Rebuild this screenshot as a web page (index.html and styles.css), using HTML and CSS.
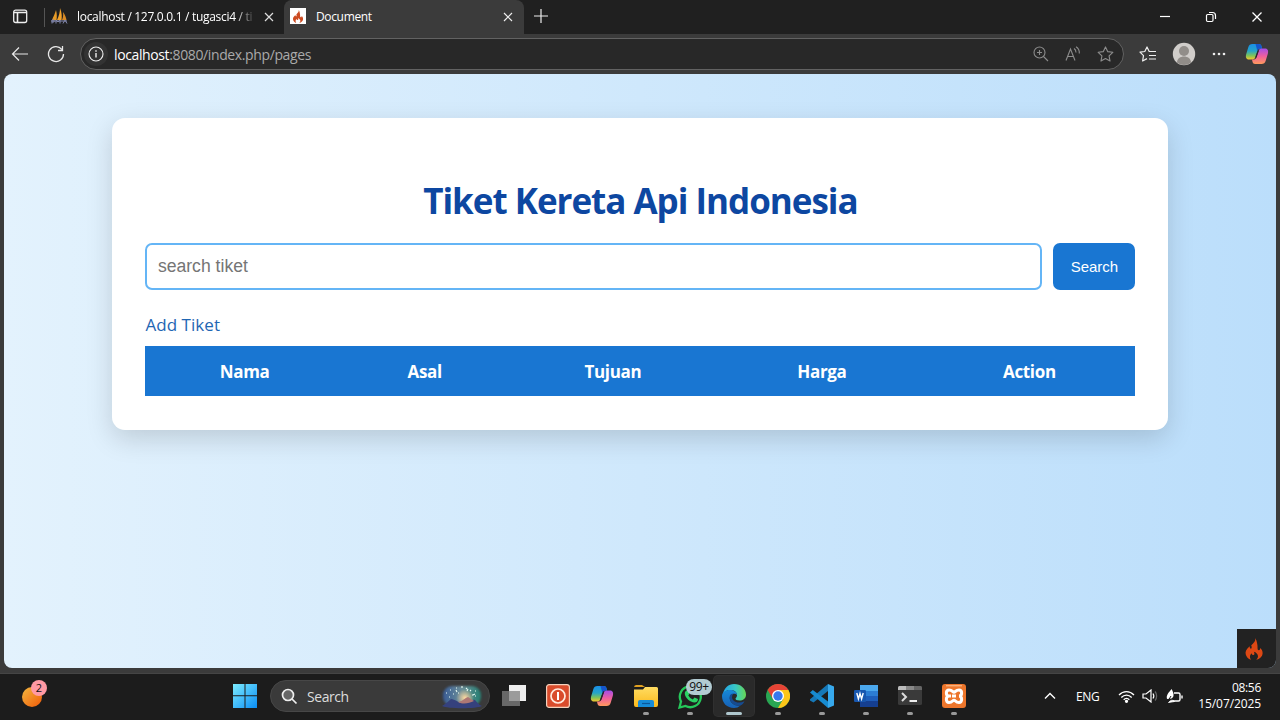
FILE: index.html
```html
<!DOCTYPE html>
<html lang="id">
<head>
<meta charset="utf-8">
<title>Document</title>
<link rel="stylesheet" href="styles.css">
</head>
<body>
<svg class="defs" width="0" height="0">
  <defs>
    <linearGradient id="cpA" x1="0" y1="0" x2="0" y2="1"><stop offset="0" stop-color="#1a8fe8"/><stop offset=".45" stop-color="#25a5c8"/><stop offset=".75" stop-color="#7ec35a"/><stop offset="1" stop-color="#f5c52c"/></linearGradient>
    <linearGradient id="cpB" x1="0" y1="0" x2="0" y2="1"><stop offset="0" stop-color="#a34de8"/><stop offset=".5" stop-color="#ef5f9d"/><stop offset="1" stop-color="#ff9a5c"/></linearGradient>
    <linearGradient id="win" x1="0" y1="0" x2="1" y2="1"><stop offset="0" stop-color="#7cecff"/><stop offset="1" stop-color="#0a8df5"/></linearGradient>
    <linearGradient id="ball" x1="0" y1="0" x2="1" y2="1"><stop offset="0" stop-color="#f3b840"/><stop offset="1" stop-color="#f05a08"/></linearGradient>
    <linearGradient id="folder" x1="0" y1="0" x2="0" y2="1"><stop offset="0" stop-color="#ffdc62"/><stop offset="1" stop-color="#fbb91c"/></linearGradient>
    <linearGradient id="edgeTop" x1="0" y1="0" x2="1" y2="0"><stop offset="0" stop-color="#23a4e8"/><stop offset=".55" stop-color="#39c9c5"/><stop offset="1" stop-color="#66d653"/></linearGradient>
    <linearGradient id="edgeLow" x1="0" y1="0" x2="0" y2="1"><stop offset="0" stop-color="#1689d8"/><stop offset="1" stop-color="#1760b5"/></linearGradient>
    <linearGradient id="sky" x1="0" y1="0" x2="1" y2="0"><stop offset="0" stop-color="#385b96"/><stop offset=".5" stop-color="#6d8f98"/><stop offset="1" stop-color="#257f72"/></linearGradient>
    <radialGradient id="glow"><stop offset="0" stop-color="#ffd9a0"/><stop offset="1" stop-color="#ffd9a0" stop-opacity="0"/></radialGradient>
    <filter id="soft" x="-10%" y="-10%" width="120%" height="120%"><feGaussianBlur stdDeviation="1.2"/></filter>
    <symbol id="flame" viewBox="0 0 18 22"><path d="M10.2 0C11 3 8.500 5 6.200 7.500 7 8.800 6.800 10 6 10.800 5.200 10.600 4.600 9.600 4.700 8.300 1.500 11 0 13.400.7 16.300 1.300 19 3.200 20.900 6 21.800 4.300 19.500 4.700 17 6.600 15.200c.2 1.300 1 2 2 1.800 1.300-.4 1-2 .2-3.200 2.200.5 4.200 2.400 4.200 4.400 0 1.500-.8 2.800-2 3.600 3.800-.8 6.400-3.300 6.600-6.300.2-2.600-1-4.300-2.500-5.500.2 1.200-.3 2.200-1.200 2.300C12 12 12.800 9.800 12.400 7 12 4 11.400 1.800 10.200 0z"/></symbol>
    <symbol id="copilot" viewBox="0 0 24 22"><path d="M7.500 1h6.300c1.900 0 2.500 1.300 2.900 3l.3 1.500h-2c-1.500 0-2.200 1-2.600 2.400L10.300 14c-.6 1.800-1.400 2.500-3 2.500H4C1 16.500.5 14 1.100 11.500L3.300 4.200C4 2 5.200 1 7.500 1z" fill="url(#cpA)"/><path d="M10.500 1h3.300c1.900 0 2.500 1.300 2.900 3l.3 1.500h-2c-1.500 0-2.200 1-2.600 2.400z" fill="#1555cc"/><path d="M16.500 21h-6.300c-1.900 0-2.500-1.300-2.900-3L7 16.500h2c1.500 0 2.200-1 2.600-2.400L13.700 8c.6-1.800 1.400-2.500 3-2.500H20c3 0 3.500 2.500 2.900 5l-2.200 7.300C20 20 18.800 21 16.500 21z" fill="url(#cpB)"/><path d="M12.700 7.500 10.300 14.500 11.500 14.500 13.900 7.500z" fill="#2a2430"/></symbol>
  </defs>
</svg>

<header class="tabstrip">
  <svg class="tab-menu" width="16" height="16" viewBox="0 0 16 16" fill="none" stroke="#eee" stroke-width="1.300"><rect x="1.700" y="2.200" width="13" height="12.300" rx="2"/><path d="M2 4.500h12.500M5.500 4.500v10" stroke-width="1.600"/></svg>
  <div class="tab tab-back">
    <svg width="18" height="17" viewBox="0 0 18 17"><path d="M2 12C3 9 5 6 6 2c1 4 1 7 .5 10z" fill="#e79b27"/><path d="M7 12c2-4 3-8 3-12 2 5 2 9 1.500 12z" fill="#f3a32b"/><path d="M12 12c1-2 1.500-5 1-8 2 3 3 5 3.500 8z" fill="#d98a25"/><path d="M1 13h16M2 15.500V12h2v2H2m4 1.500V12l2 2 2-2v3.500m3 0 2-3.500 2 3.500" fill="none" stroke="#8388ae" stroke-width="1"/></svg>
    <span class="tab-title long">localhost / 127.0.0.1 / tugasci4 / ti</span>
    <svg class="x" width="10" height="10" viewBox="0 0 10 10" stroke="#ddd" stroke-width="1.200"><path d="m1 1 8 8m0-8L1 9"/></svg>
  </div>
  <div class="tab tab-active">
    <span class="fav"><svg width="12" height="13" fill="#cc4a20"><use href="#flame"/></svg></span>
    <span class="tab-title">Document</span>
    <svg class="x" width="10" height="10" viewBox="0 0 10 10" stroke="#eee" stroke-width="1.200"><path d="m1 1 8 8m0-8L1 9"/></svg>
  </div>
  <svg class="plus" width="14" height="14" viewBox="0 0 14 14" stroke="#eee" stroke-width="1.200"><path d="M7 0v14M0 7h14"/></svg>
  <div class="window-buttons">
    <svg width="12" height="12" viewBox="0 0 12 12" stroke="#fff" stroke-width="1.200"><path d="M1 5.500h10"/></svg>
    <svg width="12" height="12" viewBox="0 0 12 12" fill="none" stroke="#fff" stroke-width="1.200"><rect x="1.500" y="3.500" width="6.500" height="7" rx="1.200"/><path d="M4 1.500h3.500c2 0 3 1 3 3V8"/></svg>
    <svg width="12" height="12" viewBox="0 0 12 12" stroke="#fff" stroke-width="1.300"><path d="m1.500 1.500 9 9m0-9-9 9"/></svg>
  </div>
</header>

<nav class="toolbar">
  <svg width="18" height="16" viewBox="0 0 18 16" fill="none" stroke="#e8e8e8" stroke-width="1.200"><path d="M17 8H1.500M8 1.500 1.500 8 8 14.500"/></svg>
  <svg width="18" height="18" viewBox="0 0 18 18" fill="none" stroke="#e8e8e8" stroke-width="1.300"><path d="M16.500 9A7.500 7.500 0 1 1 14.800 4.300M11 5.500h4.500V1"/></svg>
  <div class="address">
    <span class="info"><svg width="16" height="16" viewBox="0 0 16 16" fill="none" stroke="#eee" stroke-width="1.100"><circle cx="8" cy="8" r="7"/><path d="M8 7v4.500M8 4.300v1.400" stroke-width="1.400"/></svg></span>
    <span class="url"><b>localhost</b>:8080/index.php/pages</span>
    <div class="address-icons">
      <svg width="16" height="16" viewBox="0 0 16 16" fill="none" stroke="#8c8c8c" stroke-width="1.100"><circle cx="6.500" cy="6.500" r="5.500"/><path d="m10.500 10.500 4.500 4.500M6.500 4v5M4 6.500h5"/></svg>
      <svg width="16" height="16" viewBox="0 0 16 16" fill="none" stroke="#8c8c8c" stroke-width="1.100"><path d="M1 14.500 5.500 3 10 14.500M2.500 10.500h6M9 2.500c1.500 1 2 2.500 2 4M11 .8c2.500 1.500 3.500 4 3.300 6.700"/></svg>
      <svg width="17" height="16" viewBox="0 0 18 17" fill="none" stroke="#8c8c8c" stroke-width="1.200" stroke-linejoin="round"><path d="m9 1 2.400 5 5.400.7-4 3.800 1 5.500L9 13.400 4.200 16l1-5.500-4-3.800L6.600 6z"/></svg>
    </div>
  </div>
  <div class="browser-actions">
    <svg width="18" height="16" viewBox="0 0 18 16" fill="none" stroke="#eee" stroke-width="1.200" stroke-linejoin="round"><path d="M10.500 5.500h-.3L8 1 5.800 5.500 1 6.200l3.500 3.500L3.600 15 8 12.600M10.500 5.500H17M10 9.500h7M10 13h7"/></svg>
    <svg width="24" height="24" viewBox="0 0 24 24"><circle cx="12" cy="12" r="11.200" fill="#d0cdca"/><circle cx="12" cy="9" r="5" fill="#918d89"/><path d="M5 20.500c0-8 14-8 14 0a11 11 0 0 1-14 0z" fill="#918d89"/></svg>
    <svg width="16" height="4" viewBox="0 0 16 4" fill="#eee"><circle cx="3" cy="2" r="1.300"/><circle cx="8" cy="2" r="1.300"/><circle cx="13" cy="2" r="1.300"/></svg>
    <svg width="24" height="22"><use href="#copilot"/></svg>
  </div>
</nav>

<main class="page">
  <section class="card">
    <h1>Tiket Kereta Api Indonesia</h1>
    <form class="search">
      <input type="text" placeholder="search tiket">
      <button type="button">Search</button>
    </form>
    <a class="add">Add Tiket</a>
    <table>
      <colgroup><col class="c1"><col class="c2"><col class="c3"><col class="c4"><col class="c5"></colgroup>
      <thead><tr><th>Nama</th><th>Asal</th><th>Tujuan</th><th>Harga</th><th>Action</th></tr></thead>
    </table>
  </section>
  <div class="debug"><svg width="18" height="22" fill="#dd4814"><use href="#flame"/></svg></div>
</main>

<footer class="taskbar">
  <div class="widget">
    <svg width="20" height="20" viewBox="0 0 20 20"><circle cx="10" cy="10" r="10" fill="url(#ball)"/></svg>
    <span class="count">2</span>
  </div>
  <svg class="start" width="24" height="24" viewBox="0 0 24 24" fill="url(#win)"><path d="M0 0h11.500v11.300H0zM12.500 0H24v11.300H12.500zM0 12.300h11.500V24H0zM12.500 12.300H24V24H12.500z"/></svg>
  <div class="find">
    <svg width="17" height="17" viewBox="0 0 17 17" fill="#666" stroke="#eee" stroke-width="1.700"><circle cx="7" cy="7" r="5.500"/><path d="m11 11 4.500 4.500"/></svg>
    <span>Search</span>
    <svg class="scene" width="42" height="26" viewBox="0 0 42 26"><rect x="2" y="3" width="38" height="20" rx="9" fill="url(#sky)" filter="url(#soft)"/><circle cx="24" cy="15" r="9" fill="url(#glow)"/><path d="M5 10h1m3-3h1m2 4h1m2-6h1m1 5h1m3-7v2m4 1 1-1m3 3 1-1m1 5h1m2-4h1m-1 5h1M8 14h1m6-7 1 2m10-1 1-2m5 6 2-1" stroke="#e7fbf4" stroke-width="1.100"/><path d="M1 23c3-2 6-4 9-7 4 0 7 4 12 4 6 0 8-4 12-3 2 2 4 5 7 6-5 3-35 3-40 0z" fill="#35417d"/><path d="M17 19c5-1 7-4 10-5 2 1 4 3 6 4-5 2-10 4-16 1z" fill="#ad7774"/></svg>
  </div>
  <div class="apps">
    <div class="app"><svg width="24" height="24" viewBox="0 0 24 24"><path d="M7 1h17v16H7z" fill="#eee"/><path d="M0 7h18v15H0z" fill="#686868"/><path d="M7 7h11v10H7z" fill="#9b9b9b"/></svg></div>
    <div class="app"><svg width="24" height="24" viewBox="0 0 24 24"><rect x=".6" y=".6" width="22.800" height="22.800" rx="2.500" fill="#d94c2c" stroke="#f4d2bd" stroke-width="1.200"/><circle cx="12" cy="12" r="7" fill="none" stroke="#ffeade" stroke-width="1.700"/><path d="M12 8v8" stroke="#fff" stroke-width="2"/></svg></div>
    <div class="app"><svg width="24" height="22"><use href="#copilot"/></svg></div>
    <div class="app open"><svg width="24" height="24" viewBox="0 0 24 24"><path d="M0 3.500Q0 1 2 1h6l3 2H0z" fill="#e0a020"/><path d="M0 5.500h9L11 3h11.500Q24 3 24 4.500V21q0 2-2 2H2q-2 0-2-2z" fill="url(#folder)"/><path d="M4 23v-5q0-2 2-2h12q2 0 2 2v5z" fill="#168bd8"/><path d="M8 19.500h8" stroke="#0a579a" stroke-width="1.200"/></svg></div>
    <div class="app open"><svg width="25" height="25" viewBox="0 0 25 25"><path d="m1.500 23.500 1.500-6A10.500 10.500 0 1 1 7.500 22z" fill="#202020" stroke="#25c95a" stroke-width="2.300"/><path d="M7 8q2-3 3.500-1l1 2.500-1.200 2q1.500 2.800 4.500 4l1.700-2L20 15c0 4-4 4-7 2.500-4-2-7-6-6-9.500z" fill="#2bd264"/></svg><span class="unread">99+</span></div>
    <div class="app open current"><svg width="24" height="24" viewBox="0 0 24 24"><path d="M1 10C2 4 6.500 0 12 0c7 0 12 5 12 10.500 0 4-3 6-6.500 6-3 0-4-1-4-2 1-1 1.500-2 1.500-3C15 7 11 6 8 6c-3.500 0-6 1.800-7 4z" fill="url(#edgeTop)"/><path d="M0 12c0-3.500 3.500-6 8-6 3.500 0 7 2 7 5-1-1-2-1.500-3.500-1.200C8 10.500 7 14 8.500 17c1.500 3 5.500 5.500 10 4.500-2 1.700-4 2.500-6.500 2.500C5 24 0 19 0 12z" fill="url(#edgeLow)"/><path d="M8.500 17c-2-4-.5-7.500 3-7.500-2 2.500-2 5 0 7 3 2.800 7 2.500 11 .8-.8 1.800-2 3.200-4 4.200-4.500 1-8.500-1.500-10-4.500z" fill="#164b91"/></svg></div>
    <div class="app open"><svg width="24" height="24" viewBox="0 0 24 24"><circle cx="12" cy="12" r="12" fill="#29a653"/><path d="M1.600 6A12 12 0 0 1 22.400 6H12L7 15z" fill="#e64335"/><path d="M22.400 6A12 12 0 0 1 12 24l5.200-9L12 6z" fill="#fbc619"/><circle cx="12" cy="12" r="6" fill="#fff"/><circle cx="12" cy="12" r="4.700" fill="#3779ed"/></svg></div>
    <div class="app open"><svg width="24" height="24" viewBox="0 0 24 24"><path d="M18 0v7L3.500 18.500 0 16.500v-1.200z" fill="#1678b7"/><path d="M0 8.500 2.800 6 18 17.500V24z" fill="#178bd0"/><path d="m18 0 6 2.500v19L18 24z" fill="#37a9ed"/></svg></div>
    <div class="app open"><svg width="24" height="24" viewBox="0 0 24 24"><path d="M6 1h18v6H6z" fill="#4ba8ed"/><path d="M6 7h18v5H6z" fill="#2c7dd4"/><path d="M6 12h18v5H6z" fill="#1e5ebb"/><path d="M6 17h18v6H6z" fill="#153f91"/><rect y="6" width="12" height="12" rx="1.200" fill="#1857af"/><path d="m2.800 9 1.600 6L6 9.500 7.600 15l1.600-6" fill="none" stroke="#fff" stroke-width="1.400"/></svg></div>
    <div class="app open"><svg width="24" height="20" viewBox="0 0 24 20"><rect width="24" height="19" rx="1.500" fill="#3a3a3a"/><path d="M0 4V1.500Q0 0 1.500 0H8v4z" fill="#bbb"/><path d="M8 0h8v4H8z" fill="#888"/><path d="M16 0h6.500Q24 0 24 1.500V4h-8z" fill="#666"/><path d="m4 7 4 4-4 4" fill="none" stroke="#ddd" stroke-width="2"/><path d="M11.500 15H19" stroke="#eee" stroke-width="2"/></svg></div>
    <div class="app open"><svg width="24" height="24" viewBox="0 0 24 24"><rect width="24" height="24" rx="3" fill="#ed762c"/><path d="M4 1.800h16" stroke="#ffc89b"/><path d="M9 12H7c-3.500 0-3.500-6 0-6s3.500 2.200 5 2.200S13.500 6 17 6s3.500 6 0 6c3.500 0 3.500 6.500 0 6.500s-3.500-2.300-5-2.300-1.500 2.300-5 2.300S3.500 12 7 12M10 12h4" fill="none" stroke="#fff" stroke-width="3"/></svg></div>
  </div>
  <div class="tray">
    <svg class="chev" width="12" height="8" viewBox="0 0 12 8" fill="none" stroke="#fff" stroke-width="1.400"><path d="m1 6.500 5-5 5 5"/></svg>
    <span class="lang">ENG</span>
    <svg class="wifi" width="17" height="13" viewBox="0 0 17 13" fill="none" stroke="#fff" stroke-width="1.300"><path d="M1 5c4.300-4.500 10.700-4.500 15 0M3.300 7.500c3-3.300 7.400-3.300 10.400 0M5.700 9.800c1.700-1.900 3.900-1.900 5.600 0"/><circle cx="8.500" cy="11.300" r="1" fill="#fff"/></svg>
    <svg class="volume" width="17" height="14" viewBox="0 0 17 14" fill="none" stroke="#fff" stroke-width="1.200"><path d="M1 5h3l5-4v12L4 9H1z"/><path d="M11 4.500c1 1.500 1 3.500 0 5"/><path d="M13 2.500c2.200 2.500 2.200 6.500 0 9" stroke="#666"/></svg>
    <svg width="17" height="15" viewBox="0 0 17 15" fill="none" stroke="#fff" stroke-width="1.400"><path d="M8 4h4.500Q14 4 14 5.500v5Q14 12 12.500 12H7"/><path d="M16 6.500v3"/><path d="M5.500 0c2.500 4 3 8 0 9.500L1 10C0 6 2.500 4 5.500 0z" fill="#fff" stroke="none"/><path d="M1 13.500 5 7" stroke="#1c1c1c" stroke-width="1"/><path d="M2.500 13.500Q6 9.500 8.500 12.500z" fill="#fff" stroke-width=".8"/></svg>
    <div class="clock"><span>08:56</span><span class="date">15/07/2025</span></div>
  </div>
</footer>
</body>
</html>
```
FILE: styles.css
```css
* { box-sizing: border-box; }
body { margin: 0; width: 1280px; height: 720px; overflow: hidden; display: flex; flex-direction: column; background: #3b3b3b; font-family: "Open Sans", "Noto Sans", sans-serif; color: #fff; }
svg { display: block; flex: none; }
.defs { position: absolute; }

.tabstrip { height: 34px; flex: none; display: flex; align-items: center; background: #202020; }
.tab-menu { margin: 0 16px 2px 12px; }
.tab { display: flex; align-items: center; }
.tab-back { width: 240px; height: 34px; padding: 0 10px 2px 6px; border-radius: 0 0 8px 0; background: linear-gradient(#555, #555) 0 8px / 1px 19px no-repeat; }
.tab-title { font-size: 12px; letter-spacing: -0.3px; white-space: nowrap; }
.long { width: 179px; margin-left: 9px; overflow: hidden; -webkit-mask-image: linear-gradient(90deg, #000 88%, transparent); mask-image: linear-gradient(90deg, #000 88%, transparent); }
.tab-back .x { margin: 1px 0 0 auto; }
.tab-active { width: 240px; height: 34px; padding: 0 11px 2px 6px; background: #3b3b3b; border-radius: 8px 8px 0 0; }
.tab-active .tab-title { margin-left: 10px; letter-spacing: -0.35px; }
.tab-active .x { margin: 1px 0 0 auto; }
.fav { width: 16px; height: 16px; display: flex; align-items: center; justify-content: center; background: #fff; }
.plus { margin: 0 0 3px 10px; }
.window-buttons { margin-left: auto; padding-right: 17px; display: flex; gap: 34px; }

.toolbar { height: 40px; flex: none; display: flex; align-items: center; padding-left: 11px; }
.toolbar > svg:nth-child(2) { margin: 0 15px 0 18px; }
.address { width: 1044px; height: 32px; display: flex; align-items: center; padding: 0 9px 0 3px; border: 1px solid #626262; border-radius: 16px; background: #282828; }
.info { width: 24px; height: 24px; display: flex; align-items: center; justify-content: center; border-radius: 50%; background: #333; }
.url { margin-left: 6px; font-size: 14px; letter-spacing: -0.38px; color: #aaa; }
.url b { font-weight: 400; color: #fff; }
.address-icons { margin-left: auto; display: flex; align-items: center; gap: 16px; }
.browser-actions { display: flex; align-items: center; margin-left: 15px; gap: 15px; }
.browser-actions svg:last-child { margin-left: 3px; }

.page { flex: 1; min-height: 0; position: relative; margin: 0 4px 5px; padding-top: 44px; border-radius: 8px; overflow: hidden; background: linear-gradient(to right, #e3f2fd, #bbdefb); }
.card { width: 1056px; height: 311.500px; margin: 0 auto; padding: 57px 32.600px 0 33.400px; border-radius: 13px; background: #fff; box-shadow: 0 9px 27px rgba(0, 0, 0, .15); }
h1 { margin: 0; height: 51px; line-height: 51px; text-align: center; color: #0d47a1; font-size: 35px; font-weight: 700; letter-spacing: -1.02px; white-space: nowrap; }
.search { display: flex; gap: 11px; margin-top: 17.400px; }
.search input { width: 897.500px; height: 46.500px; padding: 0 10.500px; border: 2px solid #64b5f6; border-radius: 7px; outline: 0; font: 17.600px "Liberation Sans", sans-serif; }
.search button { width: 82px; height: 46.500px; padding: 0; border: 0; border-radius: 7px; background: #1976d2; color: #fff; font: 15px "Liberation Sans", sans-serif; }
.add { display: block; margin-top: 22.100px; height: 26px; line-height: 26px; color: #1f66b3; font-size: 17px; letter-spacing: 0.05px; }
table { width: 990px; height: 50px; margin-top: 8px; table-layout: fixed; border-collapse: collapse; background: #1976d2; }
.c1 { width: 198.500px; }
.c2 { width: 161.500px; }
.c3 { width: 215px; }
.c4 { width: 203px; }
.c5 { width: 212px; }
th { padding: 2px 0 0; font-size: 17px; font-weight: 700; letter-spacing: -0.35px; }
.debug { position: absolute; right: 0; bottom: 0; width: 39px; height: 39px; padding: 9px 0 0 8px; background: #222; }

.taskbar { height: 47px; flex: none; display: flex; align-items: center; padding-bottom: 2px; border-top: 1px solid #454545; background: #1c1c1c; }
.widget { position: relative; width: 26px; height: 32px; margin: 0 185px 0 22px; padding-top: 7px; }
.count { position: absolute; left: 9px; top: 0; width: 16px; height: 16px; border-radius: 50%; background: #ff99a4; color: #111; font-size: 11px; line-height: 16px; text-align: center; }
.find { width: 220px; height: 32px; margin-left: 13px; padding: 0 6px 0 10px; display: flex; align-items: center; border: 1px solid #474747; border-radius: 16px; background: #3a3a3a; color: #ddd; font-size: 14px; letter-spacing: -0.45px; }
.find span { margin-left: 9px; }
.scene { margin-left: auto; }
.apps { display: flex; gap: 4px; margin-left: 4px; }
.app { width: 40px; height: 40px; position: relative; display: flex; align-items: center; justify-content: center; border-radius: 4px; }
.open::after { content: ""; position: absolute; left: 17px; bottom: 1px; width: 6px; height: 3px; border-radius: 2px; background: #999; }
.current { background: #2a2a2a; box-shadow: 0 0 0 1px #303030; }
.current::after { left: 12px; width: 16px; background: #afc7ce; }
.unread { position: absolute; left: 16px; top: 3px; width: 26px; height: 16px; border-radius: 8px; background: #b2cbd2; color: #111; font-size: 12px; line-height: 16px; text-align: center; letter-spacing: -0.4px; }
.tray { margin-left: auto; padding-right: 19px; display: flex; align-items: center; font-size: 12px; }
.lang { width: 24px; margin: 0 18px 0 20px; letter-spacing: -0.3px; }
.volume { margin: 0 7px; }
.clock { width: 64px; margin-left: 14px; display: flex; flex-direction: column; align-items: flex-end; line-height: 16px; letter-spacing: -0.3px; }
.date { letter-spacing: -0.1px; }
```
